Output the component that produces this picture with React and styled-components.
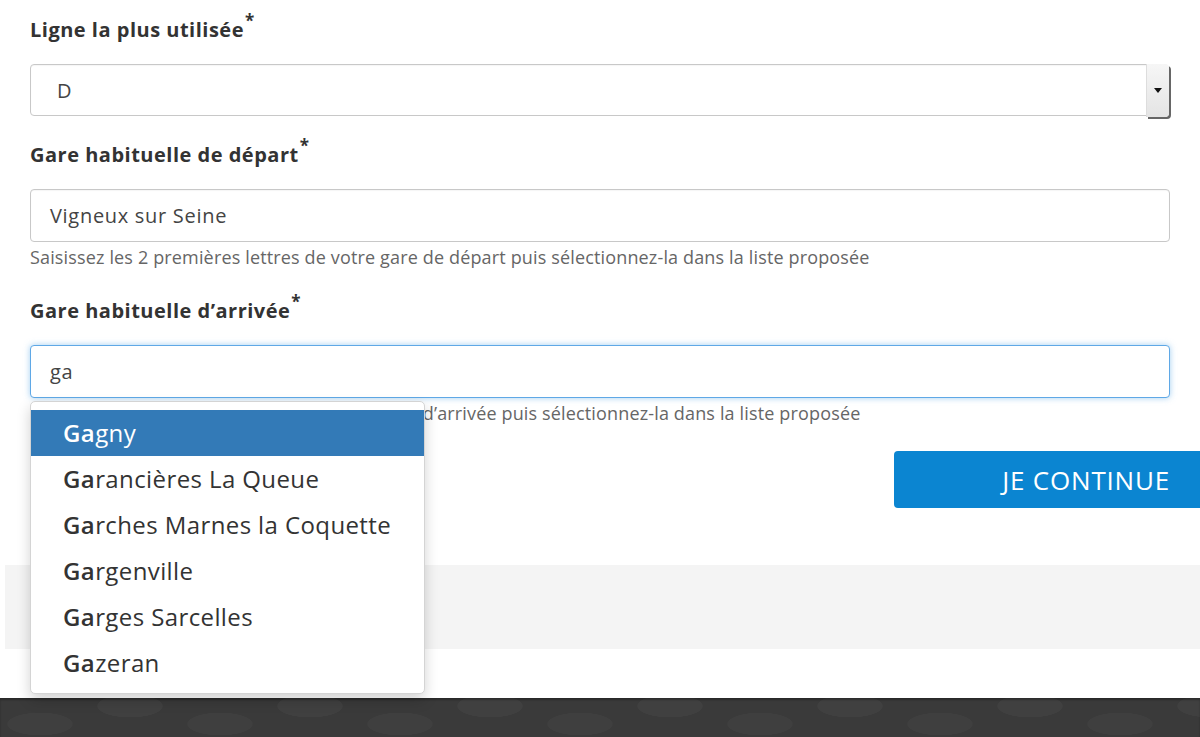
import React from 'react'
import styled, { createGlobalStyle } from 'styled-components'

const GlobalStyle = createGlobalStyle`
  html, body {
    margin: 0;
    padding: 0;
    background: #fff;
    font-family: "Open Sans", Lato, sans-serif;
    color: #333;
  }
`

const Page = styled.div`
  width: 1200px;
  height: 737px;
  overflow: hidden;
  display: flex;
  flex-direction: column;
`

const Form = styled.div`
  padding: 16px 30px 0 30px;
  display: flex;
  flex-direction: column;
  gap: 25px;
`

const Field = styled.div`
  position: relative;
  display: flex;
  flex-direction: column;
`

const Label = styled.label`
  font-size: 20px;
  font-weight: 700;
  line-height: 28px;
  letter-spacing: 0.5px;
  color: #333;
  margin-bottom: 20px;

  sup {
    font-size: 17px;
    line-height: 0;
    position: relative;
    top: -2px;
    margin-left: 1px;
  }
`

const Control = styled.div`
  height: ${p => (p.$short ? 52 : 53)}px;
  box-sizing: border-box;
  border: 1px solid ${p => (p.$focus ? '#5fa8e6' : '#c8c8c8')};
  border-radius: 4px;
  box-shadow: ${p => (p.$focus ? '0 0 6px rgba(102,175,233,0.6)' : 'inset 0 1px 1px rgba(0,0,0,0.04)')};
  display: flex;
  align-items: center;
  padding-left: ${p => p.$pad || 19}px;
  font-size: 20px;
  letter-spacing: 0.7px;
  color: #444;
  background: #fff;
  width: ${p => p.$width || 1140}px;
  position: relative;
`

const Arrow = styled.div`
  position: absolute;
  right: -2px;
  top: -1px;
  bottom: -2px;
  width: 22px;
  background: linear-gradient(#f6f6f6, #e4e4e4);
  border-left: 1px solid #ddd;
  border-radius: 0 4px 4px 0;
  box-shadow: 2px 2px 0 #666;
  display: flex;
  align-items: center;
  justify-content: center;

  &::after {
    content: '';
    border-left: 4px solid transparent;
    border-right: 4px solid transparent;
    border-top: 5px solid #111;
  }
`

const Help = styled.div`
  margin: 3px 0 3px;
  font-size: 18px;
  line-height: 24px;
  letter-spacing: 0.15px;
  color: #666;
  white-space: nowrap;
`

const Menu = styled.ul`
  position: absolute;
  left: 0;
  top: 104px;
  width: 393px;
  margin: 0;
  padding: 8px 0 7px;
  list-style: none;
  background: #fff;
  border: 1px solid #d4d4d4;
  border-radius: 5px;
  box-shadow: 0 6px 14px rgba(0, 0, 0, 0.18);
  z-index: 5;
`

const Item = styled.li`
  height: 46px;
  line-height: 46px;
  padding-left: 32px;
  font-size: 24px;
  letter-spacing: 0.4px;
  color: ${p => (p.$active ? '#fff' : '#333')};
  background: ${p => (p.$active ? '#337ab7' : 'transparent')};

  b {
    font-weight: 600;
  }
`

const ButtonRow = styled.div`
  display: flex;
  justify-content: flex-end;
  margin-top: 23px;
`

const Button = styled.button`
  width: 306px;
  height: 57px;
  border: none;
  border-radius: 4px 0 0 4px;
  background: #0b85d1;
  color: #fff;
  font-family: "Open Sans", Lato, sans-serif;
  font-size: 26px;
  letter-spacing: 0.8px;
  text-align: right;
  padding: 0 30px 0 0;
`

const Band = styled.div`
  margin: 57px 0 0 5px;
  height: 84px;
  background: #f4f4f4;
`

const Footer = styled.div`
  margin-top: 49px;
  flex: 1;
  background-color: #3a3a3a;
  background-image:
    radial-gradient(ellipse 46px 16px at 40px 26px, rgba(255,255,255,0.025) 70%, transparent 72%),
    radial-gradient(ellipse 46px 16px at 130px 8px, rgba(255,255,255,0.03) 70%, transparent 72%);
  background-size: 180px 40px;
  box-shadow: inset 0 2px 2px rgba(0,0,0,0.3);
`

const stations = [
  ['Ga', 'gny'],
  ['Ga', 'rancières La Queue'],
  ['Ga', 'rches Marnes la Coquette'],
  ['Ga', 'rgenville'],
  ['Ga', 'rges Sarcelles'],
  ['Ga', 'zeran'],
]

export default function App() {
  return (
    <Page>
      <GlobalStyle />
      <Form>
        <Field>
          <Label>Ligne la plus utilisée<sup>*</sup></Label>
          <Control $short $pad={26} $width={1138}>
            D
            <Arrow />
          </Control>
        </Field>
        <Field>
          <Label>Gare habituelle de départ<sup>*</sup></Label>
          <Control>Vigneux sur Seine</Control>
          <Help>Saisissez les 2 premières lettres de votre gare de départ puis sélectionnez-la dans la liste proposée</Help>
        </Field>
        <Field>
          <Label>Gare habituelle d’arrivée<sup>*</sup></Label>
          <Control $focus>ga</Control>
          <Help>Saisissez les 2 premières lettres de votre gare d’arrivée puis sélectionnez-la dans la liste proposée</Help>
          <Menu>
            {stations.map(([bold, rest], i) => (
              <Item key={i} $active={i === 0}>
                <b>{bold}</b>{rest}
              </Item>
            ))}
          </Menu>
        </Field>
      </Form>
      <ButtonRow>
        <Button>JE CONTINUE</Button>
      </ButtonRow>
      <Band />
      <Footer />
    </Page>
  )
}
